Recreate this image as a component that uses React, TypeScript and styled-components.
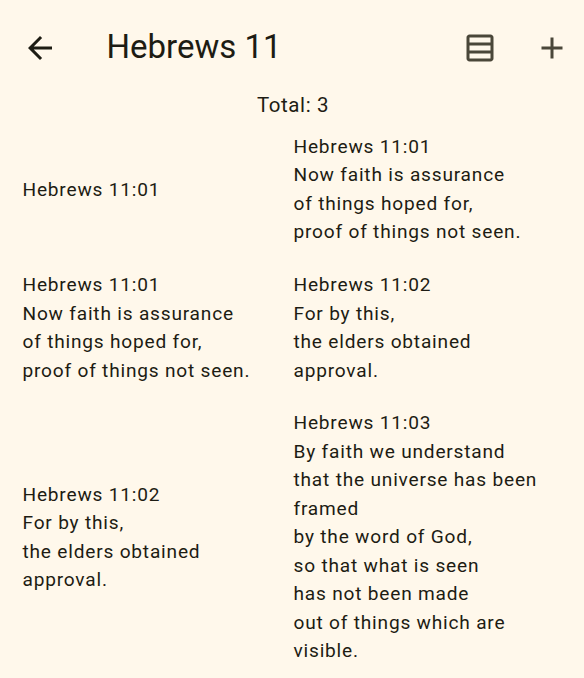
import React from "react";
import styled, { createGlobalStyle } from "styled-components";

const Global = createGlobalStyle`
  body { margin: 0; background: #fff8eb; color: #1d1c13; font-family: Roboto, sans-serif; -webkit-font-smoothing: antialiased; }
`;
const Screen = styled.main`
  width: 584px; height: 678px; overflow: hidden; background: #fff8eb;
`;
const Bar = styled.header`
  display: flex; align-items: center; height: 96px; box-sizing: border-box; padding: 0 14px 0 22px;
`;
const Title = styled.h1`
  flex: 1; margin: -2px 0 0 48.5px; font-size: 33px; line-height: 42px; font-weight: 400;
`;
const IconButton = styled.button<{ $tone: string; $gap?: number }>`
  display: flex; padding: 0; border: 0; background: none; color: ${p => p.$tone};
  margin-left: ${p => p.$gap ?? 0}px;
  svg { display: block; fill: currentColor; }
`;
const Total = styled.p`
  margin: 0; height: 36.9px; line-height: 18px; text-align: center; font-size: 20.5px; letter-spacing: 0.6px; padding-left: 2px;
`;
const Grid = styled.section`
  display: grid; grid-template-columns: 271px 271px; padding-left: 22.5px; row-gap: 24.2px;
`;
const Verse = styled.p`
  margin: 0; align-self: center; white-space: pre-line; font-size: 19.1px; line-height: 28.5px; letter-spacing: 0.8px;
`;

const first = "Hebrews 11:01\nNow faith is assurance\nof things hoped for,\nproof of things not seen.";
const second = "Hebrews 11:02\nFor by this,\nthe elders obtained\napproval.";
const third = "Hebrews 11:03\nBy faith we understand\nthat the universe has been\nframed\nby the word of God,\nso that what is seen\nhas not been made\nout of things which are\nvisible.";
const verses = ["Hebrews 11:01", first, first, second, second, third];

export default function App() {
  return (
    <Screen>
      <Global />
      <Bar>
        <IconButton $tone="#1d1c13" aria-label="Back">
          <svg width="36" height="36" viewBox="0 0 24 24"><path d="M20 11H7.83l5.59-5.59L12 4l-8 8 8 8 1.41-1.41L7.83 13H20z" /></svg>
        </IconButton>
        <Title>Hebrews 11</Title>
        <IconButton $tone="#4a4739" aria-label="List view">
          <svg width="36" height="36" viewBox="0 0 24 24"><path d="M19 3H5c-1.1 0-2 .9-2 2v14c0 1.1.9 2 2 2h14c1.1 0 2-.9 2-2V5c0-1.1-.9-2-2-2zm0 2v3.33H5V5h14zm0 5.33v3.33H5v-3.33h14zM5 19v-3.33h14V19H5z" /></svg>
        </IconButton>
        <IconButton $tone="#4a4739" $gap={36} aria-label="Add">
          <svg width="36" height="36" viewBox="0 0 24 24"><path d="M19 13h-6v6h-2v-6H5v-2h6V5h2v6h6z" /></svg>
        </IconButton>
      </Bar>
      <Total>Total: 3</Total>
      <Grid>{verses.map((text, i) => <Verse key={i}>{text}</Verse>)}</Grid>
    </Screen>
  );
}
